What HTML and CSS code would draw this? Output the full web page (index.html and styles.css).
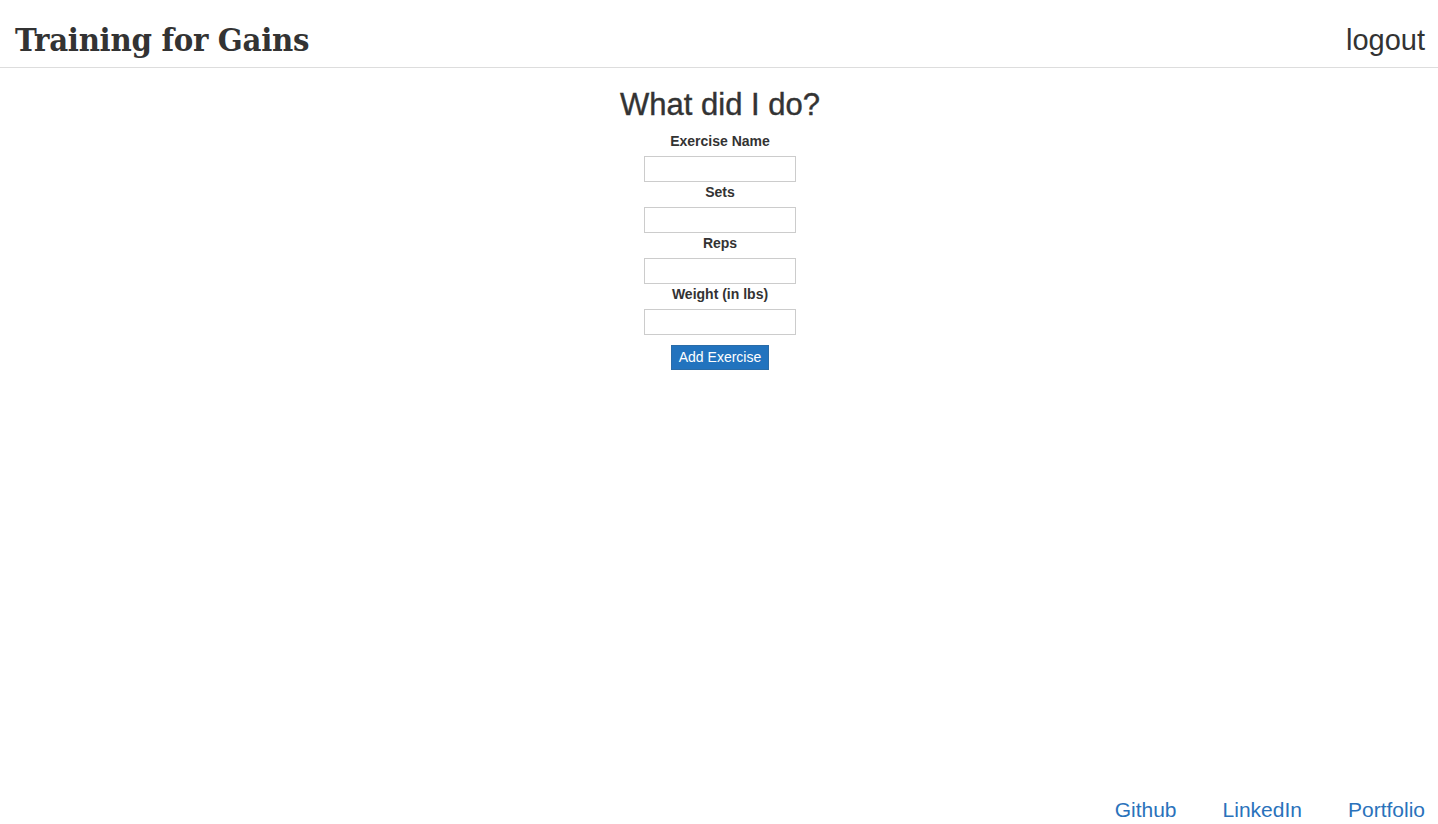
FILE: index.html
```html
<!DOCTYPE html>
<html>
<head>
<meta charset="utf-8">
<title>Training for Gains</title>
<link rel="stylesheet" href="styles.css">
</head>
<body>
<div class="page">
  <header class="topbar">
    <span class="brand">Training for Gains</span>
    <a class="logout" href="#">logout</a>
  </header>
  <main class="content">
    <h2 class="heading">What did I do?</h2>
    <form class="form">
      <label class="label">Exercise Name</label>
      <input class="field" type="text">
      <label class="label">Sets</label>
      <input class="field" type="text">
      <label class="label">Reps</label>
      <input class="field" type="text">
      <label class="label">Weight (in lbs)</label>
      <input class="field" type="text">
      <button class="btn" type="button">Add Exercise</button>
    </form>
  </main>
  <footer class="footer">
    <a href="#" class="flink">Github</a>
    <a href="#" class="flink">LinkedIn</a>
    <a href="#" class="flink">Portfolio</a>
  </footer>
</div>
</body>
</html>
```
FILE: styles.css
```css
* { box-sizing: border-box; }
html, body { margin: 0; padding: 0; }
body {
  font-family: "Liberation Sans", Arial, sans-serif;
  color: #333;
  background: #fff;
  font-size: 14px;
  line-height: 1.42857;
}
.page {
  height: 824px;
  display: flex;
  flex-direction: column;
}
.topbar {
  height: 68px;
  border-bottom: 1px solid #ddd;
  display: flex;
  align-items: center;
  justify-content: space-between;
  padding: 14px 13px 0 15px;
}
.brand {
  font-family: "DejaVu Serif Condensed", "DejaVu Serif", serif;
  font-stretch: condensed;
  font-weight: bold;
  font-size: 32.5px;
  color: #333;
  letter-spacing: -0.3px;
}
.logout {
  font-size: 29px;
  color: #333;
  text-decoration: none;
}
.content {
  flex: 1;
  display: flex;
  flex-direction: column;
  align-items: center;
  padding-left: 2px;
}
.heading {
  font-size: 31px;
  font-weight: normal;
  line-height: 1.1;
  margin: 20px 0 9px;
  -webkit-text-stroke: 0.4px #333;
}
.form {
  display: flex;
  flex-direction: column;
  align-items: center;
}
.label {
  font-weight: bold;
  padding-top: 1px;
  margin-bottom: 4px;
}
.field {
  width: 152px;
  height: 26px;
  border: 1px solid #ccc;
  padding: 2px 4px;
  font: inherit;
}
.btn {
  margin-top: 10px;
  width: 98px;
  height: 25px;
  padding: 0;
  background: #2273be;
  border: 1px solid #2a6ca8;
  color: #fff;
  font: inherit;
  font-size: 14px;
}
.footer {
  display: flex;
  justify-content: flex-end;
  gap: 46px;
  padding: 0 13px 2px 0;
}
.flink {
  font-size: 21px;
  color: #2a72bb;
  text-decoration: none;
  line-height: 24px;
}
```
